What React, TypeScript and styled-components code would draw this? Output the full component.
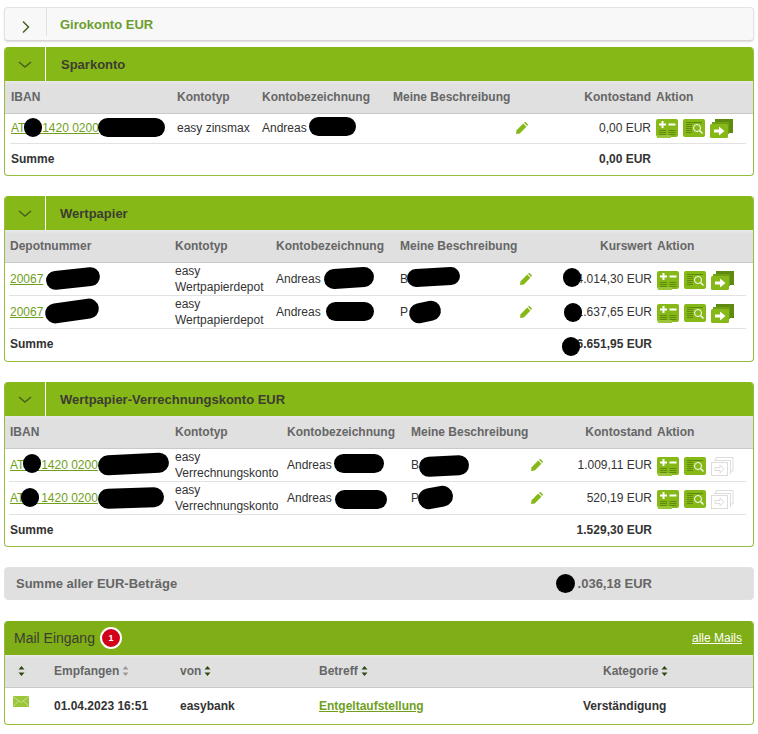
import React from 'react';
import styled, { createGlobalStyle } from 'styled-components';

const Global = createGlobalStyle`
  html, body { margin: 0; padding: 0; background: #fff; }
  body { font-family: "Liberation Sans", Arial, sans-serif; font-size: 12px; color: #333; }
`;

const Page = styled.div`
  width: 750px;
  padding: 7px 0 0 4px;
  display: flex;
  flex-direction: column;
`;

const Panel = styled.section<{ $gap?: number }>`
  box-sizing: border-box;
  border: 1px solid #95bd3f;
  border-top: 0;
  border-radius: 4px;
  margin-bottom: ${(p) => p.$gap ?? 20}px;
  overflow: hidden;
  background: #fff;
`;

const PanelHeader = styled.header`
  height: 34px;
  margin: 0 -1px;
  display: flex;
  align-items: center;
  background: #86b817;
  color: #3d3d32;
  font-size: 13px;
  font-weight: bold;
`;

const Toggle = styled.div`
  box-sizing: border-box;
  width: 42px;
  height: 100%;
  border-right: 1px solid #fff;
  display: flex;
  align-items: center;
  justify-content: center;
`;

const Title = styled.h2<{ $left: number }>`
  margin: 0 0 0 ${(p) => p.$left}px;
  font-size: 13px;
  font-weight: bold;
`;

const ClosedPanel = styled.section`
  box-sizing: border-box;
  height: 34px;
  margin-bottom: 6px;
  border: 1px solid #e4e4e4;
  border-bottom: 1px solid #d5d5d5;
  border-radius: 4px;
  display: flex;
  align-items: center;
  background: #f8f8f8;
  box-shadow: 0 1px 2px #ddd;
  color: #6c9d2f;
`;

const ClosedToggle = styled(Toggle)`
  height: 28px;
  padding-top: 9px;
  align-self: flex-start;
  border-right-color: #e2e2e2;
`;

const Row = styled.div<{ $cols: string; $height: number; $left: number }>`
  position: relative;
  display: grid;
  grid-template-columns: ${(p) => p.$cols};
  align-items: center;
  box-sizing: border-box;
  height: ${(p) => p.$height}px;
  margin: 0 7px 0 ${(p) => p.$left}px;
`;

const BodyRow = styled(Row)`
  padding-bottom: 2px;
  border-bottom: 1px solid #e2e2e2;
  line-height: 16px;
`;

const TotalRow = styled(Row)`
  padding-bottom: 2px;
  font-weight: bold;
`;

const HeadBand = styled.div`
  background: linear-gradient(#e9e9e9, #e0e0e0 4px);
  border-bottom: 1px solid #c9c9c9;
  color: #666;
  font-weight: bold;
`;

const Cell = styled.div<{ $right?: boolean }>`
  padding-left: 1px;
  text-align: ${(p) => (p.$right ? 'right' : 'left')};
  white-space: ${(p) => (p.$right ? 'nowrap' : 'normal')};
`;

const AccountLink = styled.a`
  color: #6f9f1c;
  text-decoration: underline;
`;

const DescCell = styled.div`
  display: flex;
  align-items: center;
  justify-content: space-between;
  padding-left: 1px;
`;

const Actions = styled.div`
  display: flex;
  align-items: center;
  gap: 5px;
  padding-left: 5px;
`;

const RowActions = styled(Actions)`
  padding-top: 2px;
`;

const Blob = styled.span<{ $x: number; $y: number; $w: number; $h: number; $rot?: number }>`
  position: absolute;
  left: ${(p) => p.$x}px;
  top: ${(p) => p.$y}px;
  width: ${(p) => p.$w}px;
  height: ${(p) => p.$h}px;
  background: #000;
  border-radius: ${(p) => p.$h / 2}px;
  transform: rotate(${(p) => p.$rot ?? 0}deg);
`;

const TotalBar = styled.section`
  position: relative;
  box-sizing: border-box;
  height: 33px;
  margin-bottom: 21px;
  padding: 0 101px 0 11px;
  border: 1px solid #e2e2e2;
  border-radius: 4px;
  display: flex;
  align-items: center;
  justify-content: space-between;
  background: #e0e0e0;
  color: #666;
  font-size: 13px;
  font-weight: bold;
`;

const MailHeader = styled(PanelHeader)`
  background: #7fae17;
  padding: 0 12px 0 10px;
  justify-content: space-between;
  font-size: 14px;
  font-weight: normal;
`;

const MailTitle = styled.div`
  display: flex;
  align-items: center;
  gap: 3px;
`;

const Badge = styled.span`
  box-sizing: border-box;
  width: 22px;
  height: 22px;
  margin-left: 2px;
  border: 2px solid #fff;
  border-radius: 50%;
  display: flex;
  align-items: center;
  justify-content: center;
  background: #d0021b;
  color: #fff;
  font-size: 9px;
  font-weight: bold;
`;

const AllMails = styled.a`
  color: #fff;
  font-size: 12px;
  text-decoration: underline;
`;

const MailRow = styled(Row)`
  padding-bottom: 1px;
  font-weight: bold;
`;

const SortLabel = styled.div<{ $pad?: number }>`
  display: flex;
  align-items: center;
  gap: 3px;
  padding-left: ${(p) => p.$pad ?? 0}px;
`;

const MailGlyph = styled.div`
  margin: -9px 0 0 8px;
  display: flex;
`;

const SubjectLink = styled(AccountLink)`
  font-weight: bold;
`;

const Chevron = ({ open, color = '#46601f' }: { open: boolean; color?: string }) => (
  <svg width="14" height="14" viewBox="0 0 14 14" fill="none" stroke={color} strokeWidth="1.5">
    {open ? <path d="M1 5l6 5 6-5" /> : <path d="M4 1.5l5.500 5.500-5.500 5.500" />}
  </svg>
);

const Pencil = () => (
  <svg width="12" height="12" viewBox="0 0 12 12" fill="#86b817">
    <path d="M0 12l.6-3.800L7.200 1.600l3.200 3.200L3.800 11.400z" />
    <path d="M8 .8l.6-.6a.8.8 0 0 1 1.100 0l2 2a.8.8 0 0 1 0 1.100l-.6.6z" />
  </svg>
);

const PlusMinus = () => (
  <svg width="22" height="19" viewBox="0 0 22 19">
    <rect x="0" y="0" width="22" height="18" rx="2" fill="#86b817" />
    <rect x="1" y="16" width="14" height="3" fill="#9cc63a" />
    <path d="M3 5.500h7M6.500 2v7M12.500 5.500h7" stroke="#fff" strokeWidth="2" />
    <path d="M3 11.500h7M3 13.500h7M3 15.500h7M12.500 11.500h7M12.500 13.500h7M12.500 15.500h7" stroke="#5f8a10" strokeWidth="1" />
  </svg>
);

const Search = () => (
  <svg width="22" height="19" viewBox="0 0 22 19">
    <rect width="22" height="18" rx="2" fill="#86b817" />
    <path d="M3 3.500h16M3 5.500h6M3 7.500h6M3 9.500h6M3 11.500h6M3 13.500h6" stroke="#5f8a10" strokeWidth="1" />
    <circle cx="14" cy="9" r="3.500" fill="none" stroke="#fff" strokeWidth="1" />
    <path d="M16.500 11.500l3 3" stroke="#fff" strokeWidth="1.300" />
  </svg>
);

const Transfer = ({ disabled }: { disabled?: boolean }) =>
  disabled ? (
    <svg width="23" height="19" viewBox="0 0 23 19" fill="none" stroke="#dcdcdc">
      <path d="M5 3V.5h17V14h-3" />
      <path d="M3 3.500h16.500V17" />
      <rect x=".5" y="5.500" width="16" height="13" fill="#fff" />
      <path d="M4 10.500h5V8l4 4-4 4v-2.500H4z" />
    </svg>
  ) : (
    <svg width="23" height="19" viewBox="0 0 23 19">
      <path d="M5 0h18v14h-4V3H5z" fill="#5f8a10" />
      <path d="M2 3h17v12H2z" fill="#6f9f14" />
      <rect y="5" width="18" height="14" rx="1.500" fill="#86b817" />
      <path d="M4 10.500h5V7.500l5.500 4.500-5.500 4.500v-3H4z" fill="#fff" />
    </svg>
  );

const Sort = ({ muted }: { muted?: boolean }) => (
  <svg width="7" height="10" viewBox="0 0 7 10" fill={muted ? '#9a9a9a' : '#2f4a14'}>
    <path d="M3.500 0L6.500 3.500H.5zM3.500 10L.5 6.500h6z" />
  </svg>
);

const Mail = () => (
  <svg width="16" height="11" viewBox="0 0 16 11">
    <rect width="16" height="11" fill="#9cc63a" />
    <path d="M0 .5l8 6 8-6M0 10.500l5.500-5.500M16 10.500L10.500 5" fill="none" stroke="#d5e6a6" strokeWidth=".8" />
  </svg>
);

type BlobSpec = { x: number; y: number; w: number; h: number; rot?: number };

type AccountRow = {
  account: string;
  type: string;
  name: string;
  desc?: string;
  amount: string;
  blobs: BlobSpec[];
  noTransfer?: boolean;
};

type AccountPanelProps = {
  title: string;
  titleLeft: number;
  cols: string;
  left: number;
  firstHead: string;
  amountHead: string;
  rows: AccountRow[];
  rowHeight: number;
  total: string;
  totalBlobs?: BlobSpec[];
  totalHeight: number;
};

const renderBlobs = (blobs: BlobSpec[] = []) =>
  blobs.map((b, i) => <Blob key={i} $x={b.x} $y={b.y} $w={b.w} $h={b.h} $rot={b.rot} />);

function AccountPanel(props: AccountPanelProps) {
  const { cols, left, rows, rowHeight } = props;
  return (
    <Panel>
      <PanelHeader>
        <Toggle>
          <Chevron open />
        </Toggle>
        <Title $left={props.titleLeft}>{props.title}</Title>
      </PanelHeader>
      <HeadBand>
        <Row $cols={cols} $height={32} $left={left}>
          <Cell>{props.firstHead}</Cell>
          <Cell>Kontotyp</Cell>
          <Cell>Kontobezeichnung</Cell>
          <Cell>Meine Beschreibung</Cell>
          <Cell $right>{props.amountHead}</Cell>
          <Actions>Aktion</Actions>
        </Row>
      </HeadBand>
      {rows.map((row, i) => (
        <BodyRow key={i} $cols={cols} $height={rowHeight} $left={left}>
          <Cell>
            <AccountLink>{row.account}</AccountLink>
          </Cell>
          <Cell>{row.type}</Cell>
          <Cell>{row.name}</Cell>
          <DescCell>
            <span>{row.desc}</span>
            <Pencil />
          </DescCell>
          <Cell $right>{row.amount}</Cell>
          <RowActions>
            <PlusMinus />
            <Search />
            <Transfer disabled={row.noTransfer} />
          </RowActions>
          {renderBlobs(row.blobs)}
        </BodyRow>
      ))}
      <TotalRow $cols={cols} $height={props.totalHeight} $left={left}>
        <Cell>Summe</Cell>
        <span />
        <span />
        <span />
        <Cell $right>{props.total}</Cell>
        <span />
        {renderBlobs(props.totalBlobs)}
      </TotalRow>
    </Panel>
  );
}

const mailCols = '49px 126px 139px 264px 1fr';

export default function App() {
  return (
    <Page>
      <Global />
      <ClosedPanel>
        <ClosedToggle>
          <Chevron open={false} />
        </ClosedToggle>
        <Title $left={13}>Girokonto EUR</Title>
      </ClosedPanel>

      <AccountPanel
        title="Sparkonto"
        titleLeft={15}
        cols="166px 85px 131px 136px 123px 1fr"
        left={5}
        firstHead="IBAN"
        amountHead="Kontostand"
        rowHeight={30}
        totalHeight={31}
        total="0,00 EUR"
        rows={[
          {
            account: 'AT00 1420 0200',
            type: 'easy zinsmax',
            name: 'Andreas',
            amount: '0,00 EUR',
            blobs: [
              { x: 14, y: 4, w: 18, h: 19 },
              { x: 88, y: 4, w: 67, h: 19 },
              { x: 299, y: 3, w: 47, h: 19 },
            ],
          },
        ]}
      />

      <AccountPanel
        title="Wertpapier"
        titleLeft={14}
        cols="165px 101px 124px 133px 120px 1fr"
        left={4}
        firstHead="Depotnummer"
        amountHead="Kurswert"
        rowHeight={33}
        totalHeight={32}
        total="6.651,95 EUR"
        totalBlobs={[{ x: 553, y: 8, w: 18, h: 19 }]}
        rows={[
          {
            account: '20067',
            type: 'easy Wertpapierdepot',
            name: 'Andreas',
            desc: 'B',
            amount: '4.014,30 EUR',
            blobs: [
              { x: 37, y: 6, w: 54, h: 19, rot: -6 },
              { x: 315, y: 5, w: 50, h: 20, rot: -4 },
              { x: 398, y: 5, w: 53, h: 18, rot: -3 },
              { x: 554, y: 5, w: 18, h: 19 },
            ],
          },
          {
            account: '20067',
            type: 'easy Wertpapierdepot',
            name: 'Andreas',
            desc: 'P',
            amount: '1.637,65 EUR',
            blobs: [
              { x: 36, y: 5, w: 54, h: 20, rot: -8 },
              { x: 317, y: 6, w: 48, h: 19 },
              { x: 400, y: 6, w: 32, h: 20, rot: -12 },
              { x: 555, y: 7, w: 18, h: 19 },
            ],
          },
        ]}
      />

      <AccountPanel
        title="Wertpapier-Verrechnungskonto EUR"
        titleLeft={14}
        cols="165px 112px 124px 133px 109px 1fr"
        left={4}
        firstHead="IBAN"
        amountHead="Kontostand"
        rowHeight={33}
        totalHeight={31}
        total="1.529,30 EUR"
        rows={[
          {
            account: 'AT00 1420 0200',
            type: 'easy Verrechnungskonto',
            name: 'Andreas',
            desc: 'B',
            amount: '1.009,11 EUR',
            noTransfer: true,
            blobs: [
              { x: 14, y: 5, w: 18, h: 19 },
              { x: 89, y: 5, w: 71, h: 20, rot: -3 },
              { x: 325, y: 5, w: 50, h: 19 },
              { x: 410, y: 7, w: 50, h: 20, rot: -3 },
            ],
          },
          {
            account: 'AT00 1420 0200',
            type: 'easy Verrechnungskonto',
            name: 'Andreas',
            desc: 'P',
            amount: '520,19 EUR',
            noTransfer: true,
            blobs: [
              { x: 12, y: 6, w: 18, h: 19 },
              { x: 89, y: 6, w: 66, h: 20, rot: -2 },
              { x: 326, y: 8, w: 52, h: 19 },
              { x: 409, y: 5, w: 35, h: 21, rot: -10 },
            ],
          },
        ]}
      />

      <TotalBar>
        <span>Summe aller EUR-Beträge</span>
        <span>.036,18 EUR</span>
        <Blob $x={551} $y={6} $w={19} $h={19} />
      </TotalBar>

      <Panel $gap={0}>
        <MailHeader>
          <MailTitle>
            Mail Eingang
            <Badge>1</Badge>
          </MailTitle>
          <AllMails>alle Mails</AllMails>
        </MailHeader>
        <HeadBand>
          <Row $cols={mailCols} $height={32} $left={0}>
            <SortLabel $pad={13}>
              <Sort />
            </SortLabel>
            <SortLabel>
              Empfangen <Sort muted />
            </SortLabel>
            <SortLabel>
              von <Sort />
            </SortLabel>
            <SortLabel>
              Betreff <Sort />
            </SortLabel>
            <SortLabel $pad={20}>
              Kategorie <Sort />
            </SortLabel>
          </Row>
        </HeadBand>
        <MailRow $cols={mailCols} $height={36} $left={0}>
          <MailGlyph>
            <Mail />
          </MailGlyph>
          <div>01.04.2023 16:51</div>
          <div>easybank</div>
          <div>
            <SubjectLink>Entgeltaufstellung</SubjectLink>
          </div>
          <div>Verständigung</div>
        </MailRow>
      </Panel>
    </Page>
  );
}
